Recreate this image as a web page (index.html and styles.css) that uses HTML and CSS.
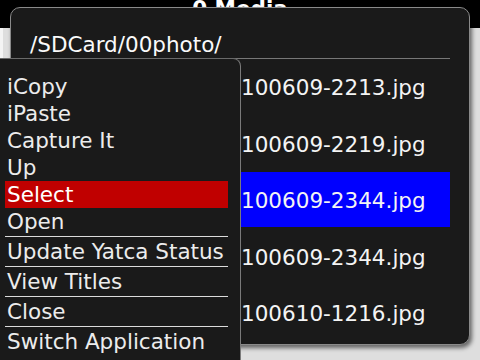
FILE: index.html
```html
<!DOCTYPE html>
<html>
<head>
<meta charset="utf-8">
<link rel="stylesheet" href="styles.css">
</head>
<body>
<div class="screen">
  <header class="topbar"><span class="title">0 Media</span></header>
  <div class="underlay"></div>
  <div class="dialog">
    <div class="path">/SDCard/00photo/</div>
    <ul class="files">
      <li class="file">100609-2213.jpg</li>
      <li class="file">100609-2219.jpg</li>
      <li class="file selected">100609-2344.jpg</li>
      <li class="file">100609-2344.jpg</li>
      <li class="file">100610-1216.jpg</li>
    </ul>
  </div>
  <div class="menu">
    <div class="item">iCopy</div>
    <div class="item">iPaste</div>
    <div class="item">Capture It</div>
    <div class="item">Up</div>
    <div class="item active">Select</div>
    <div class="item">Open</div>
    <div class="sep"></div>
    <div class="item">Update Yatca Status</div>
    <div class="sep"></div>
    <div class="item">View Titles</div>
    <div class="sep"></div>
    <div class="item">Close</div>
    <div class="sep"></div>
    <div class="item">Switch Application</div>
  </div>
</div>
</body>
</html>
```

FILE: styles.css
```css
* { box-sizing: border-box; }
html, body { margin: 0; padding: 0; }
body {
  width: 480px;
  height: 360px;
  overflow: hidden;
  background: #e2e2e2;
  font-family: "DejaVu Sans", "Liberation Sans", sans-serif;
  color: #f2f2f2;
}
.screen {
  position: relative;
  width: 480px;
  height: 360px;
  overflow: hidden;
}
.topbar {
  height: 28px;
  background: #000;
  text-align: center;
}
.title {
  display: inline-block;
  font-weight: bold;
  font-size: 21.5px;
  line-height: 18px;
  color: #fff;
}
.underlay {
  height: 332px;
  background: linear-gradient(90deg, #f4f4f4 0, #f4f4f4 3px, #dedede 3px);
}
.dialog {
  position: absolute;
  left: 10px;
  top: 7px;
  width: 460px;
  height: 338px;
  background: #1a1a1a;
  border: 1px solid #8a8a8a;
  border-radius: 10px;
  box-shadow: 2px 3px 4px rgba(0, 0, 0, 0.55);
  padding: 24px 19px 0 19px;
}
.path {
  font-size: 21.5px;
  line-height: 26px;
  height: 27px;
  border-bottom: 1px solid #777;
  color: #fafafa;
}
.files {
  list-style: none;
  margin: 0;
  padding: 0;
}
.file {
  height: 55px;
  margin-bottom: 1.5px;
  padding: 2px 0 0 211px;
  font-size: 21.5px;
  line-height: 53px;
  color: #f4f4f4;
}
.file.selected {
  background: #0000ff;
}
.menu {
  position: absolute;
  left: 0;
  top: 58px;
  width: 241px;
  height: 320px;
  background: #1a1a1a;
  border-top: 1px solid #6a6a6a;
  border-right: 1px solid #7a7a7a;
  border-top-right-radius: 8px;
  padding-top: 14px;
}
.item {
  margin-left: 5px;
  width: 223px;
  height: 27px;
  padding-left: 2px;
  font-size: 21.5px;
  line-height: 27px;
  white-space: nowrap;
  color: #ececec;
}
.item.active {
  background: #c00000;
  color: #fff;
}
.sep {
  margin: 1px 0 1px 5px;
  width: 223px;
  height: 1px;
  background: #dcdcdc;
}
```
